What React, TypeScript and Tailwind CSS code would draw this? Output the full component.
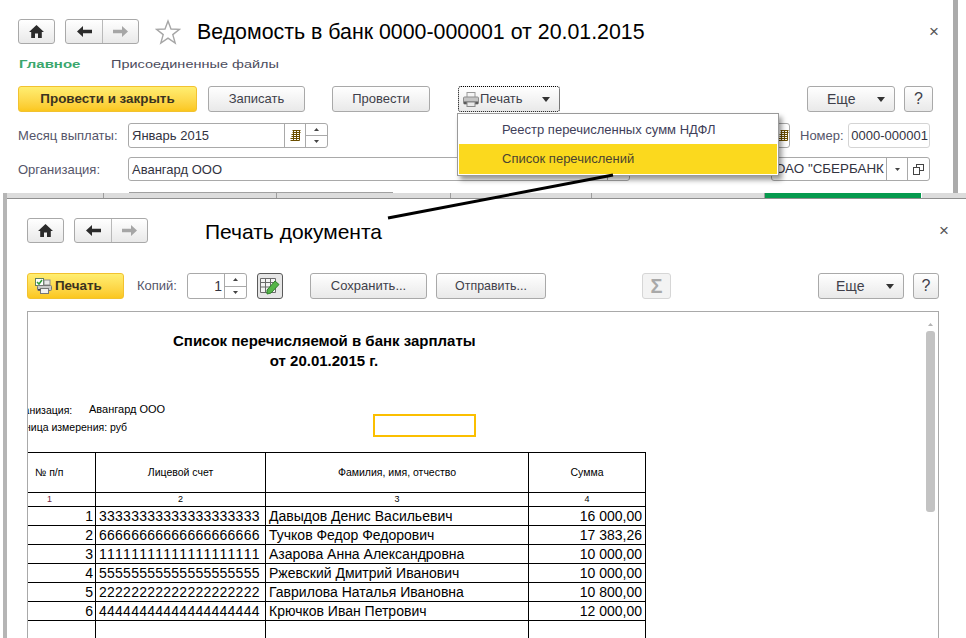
import React from "react";

const ui = "font-['Liberation_Sans',Arial,sans-serif]";

function HomeIcon() {
  return (
    <svg width="15" height="13" viewBox="0 0 15 13">
      <path d="M7.5 0 L15 7 L12.8 7 L12.8 13 L9 13 L9 8.5 L6 8.5 L6 13 L2.2 13 L2.2 7 L0 7 Z" fill="#2b2b2b" />
    </svg>
  );
}

function ArrowIcon({ dir, color }: { dir: "l" | "r"; color: string }) {
  return (
    <svg width="15" height="11" viewBox="0 0 15 11" className={dir === "r" ? "-scale-x-100" : ""}>
      <path d="M0 5.5 L6 0 L6 3.8 L15 3.8 L15 7.2 L6 7.2 L6 11 Z" fill={color} />
    </svg>
  );
}

function Caret() {
  return (
    <svg width="8" height="5" viewBox="0 0 8 5">
      <path d="M0 0 H8 L4 5 Z" fill="#333" />
    </svg>
  );
}

function TinyCaret() {
  return (
    <svg width="5" height="3" viewBox="0 0 5 3">
      <path d="M0 0 H5 L2.5 3 Z" fill="#444" />
    </svg>
  );
}

function TinyUp() {
  return (
    <svg width="5" height="3" viewBox="0 0 5 3">
      <path d="M0 3 H5 L2.5 0 Z" fill="#444" />
    </svg>
  );
}

function PrinterIcon() {
  return (
    <svg width="16" height="15" viewBox="0 0 16 15">
      <rect x="4" y="0.5" width="8" height="5" fill="#f4f4f4" stroke="#9a9a9a" />
      <rect x="0.5" y="5" width="15" height="7" rx="1" fill="#c4c4c4" stroke="#8d8d8d" />
      <rect x="1" y="9.5" width="14" height="2.5" fill="#5a5a5a" />
      <rect x="4" y="10" width="8" height="4.5" fill="#e9e9e9" stroke="#8a8a8a" />
    </svg>
  );
}

function PrintCheckIcon() {
  return (
    <svg width="17" height="16" viewBox="0 0 17 16">
      <rect x="0.5" y="0.5" width="8" height="7" fill="#fff" stroke="#5f7f5f" />
      <path d="M2 4 L4 6 L7 2" fill="none" stroke="#2f9a3a" strokeWidth="1.5" />
      <rect x="9" y="2" width="6" height="5" fill="#e8e8e8" stroke="#8b8b8b" />
      <rect x="2.5" y="7.5" width="14" height="5" rx="1" fill="#c9c9c9" stroke="#777" />
      <rect x="5.5" y="10.5" width="8" height="5" fill="#f2f2f2" stroke="#777" />
      <rect x="3" y="11" width="2.5" height="1.5" fill="#444" />
    </svg>
  );
}

function CalendarIcon() {
  return (
    <svg width="11" height="11" viewBox="0 0 11 11">
      <path
        d="M2.5 .5 H10.5 M2.5 2.5 H10.5 M1.5 4.5 H9.5 M1.5 6.5 H9.5 M.5 8.5 H9.5 M.5 10.5 H9.5 M3.5 .5 V10.5 M6.5 .5 V10.5 M9.5 .5 V10.5"
        stroke="#6b4e00"
        strokeWidth="1"
        fill="none"
      />
    </svg>
  );
}

function OpenIcon() {
  return (
    <svg width="11" height="11" viewBox="0 0 11 11">
      <rect x="3.5" y="0.5" width="7" height="6" fill="none" stroke="#444" />
      <rect x="0.5" y="3.5" width="6" height="7" fill="#fff" stroke="#444" />
    </svg>
  );
}

function TableEditIcon() {
  return (
    <svg width="20" height="18" viewBox="0 0 20 18">
      <path d="M.5 1.5 H15.5 V15.5 H.5 Z M.5 5.5 H15.5 M.5 10 H15.5 M5.5 1.5 V15.5 M10.5 1.5 V15.5" fill="#f4f4f4" stroke="#6b6b6b" />
      <path d="M7 13 L15 4 L19 7.5 L11 16 L7 17 Z" fill="#55b548" stroke="#2f7d2b" />
    </svg>
  );
}

function Btn({
  children,
  w,
  yellow = false,
  className = "",
}: {
  children: React.ReactNode;
  w: string;
  yellow?: boolean;
  className?: string;
}) {
  const skin = yellow
    ? "bg-linear-to-b from-[#ffee70] to-[#fbc71c] border-[#f2c230] font-bold text-[#3a3320] text-[13.4px]"
    : "bg-linear-to-b from-[#ffffff] to-[#e9e9e9] border-[#a9a9a9] text-[#3f3f4a] text-[13px]";
  return (
    <div className={`${w} h-full flex items-center justify-center shrink-0 rounded-[3px] border ${skin} ${className}`}>
      {children}
    </div>
  );
}

function MoreBtn({ w, left, className = "" }: { w: string; left: string; className?: string }) {
  return (
    <div className={`${w} ${left} ${className} h-full flex items-center shrink-0 rounded-[3px] border border-[#a9a9a9] bg-linear-to-b from-[#ffffff] to-[#e9e9e9] text-[14px] text-[#3f3f4a]`}>
      <span className="w-[50px]">Еще</span>
      <Caret />
    </div>
  );
}

function NavButtons() {
  return (
    <>
      <Btn w="w-[37px]">
        <HomeIcon />
      </Btn>
      <div className="ml-[10px] w-[74px] h-full flex shrink-0 rounded-[3px] border border-[#a9a9a9] bg-linear-to-b from-[#ffffff] to-[#e9e9e9]">
        <div className="w-[37px] flex items-center justify-center border-r border-[#b9b9b9]">
          <ArrowIcon dir="l" color="#2b2b2b" />
        </div>
        <div className="flex-1 flex items-center justify-center">
          <ArrowIcon dir="r" color="#a6a6a6" />
        </div>
      </div>
    </>
  );
}

function Spin() {
  return (
    <div className="flex flex-col h-full w-[22px] border-l border-[#a9a9a9]">
      <div className="flex-1 flex items-center justify-center border-b border-[#a9a9a9]">
        <TinyUp />
      </div>
      <div className="flex-1 flex items-center justify-center">
        <TinyCaret />
      </div>
    </div>
  );
}

function Field({ children, w, className = "" }: { children: React.ReactNode; w: string; className?: string }) {
  return (
    <div className={`${w} h-full flex items-stretch shrink-0 bg-white rounded-[3px] border border-[#a9a9a9] text-[13px] text-[#33333f] ${className}`}>
      {children}
    </div>
  );
}

function TopWindow() {
  return (
    <div className="w-[958px] h-[193px] border-r-[5px] border-[#ababab] pl-[18px] flex flex-col shrink-0">
      <div className="mt-[19px] h-[25px] flex items-center">
        <NavButtons />
        <svg width="26" height="26" viewBox="0 0 26 26" className="ml-[16px] shrink-0">
          <path
            d="M13 2 L16 10 L24.5 10.3 L17.8 15.6 L20.2 24 L13 19.2 L5.8 24 L8.2 15.6 L1.5 10.3 L10 10 Z"
            fill="none"
            stroke="#a6a6a6"
            strokeWidth="1.4"
          />
        </svg>
        <div className="ml-[16px] pt-[2px] text-[21.35px] text-black whitespace-nowrap leading-none">
          Ведомость в банк 0000-000001 от 20.01.2015
        </div>
        <div className="ml-auto mr-[14px] text-[#555] text-[17px] leading-none">×</div>
      </div>
      <div className="mt-[13px] h-[14px] flex items-center leading-none whitespace-nowrap scale-y-[0.72]">
        <span className="ml-px w-[92px] shrink-0 font-bold text-[15px] text-[#3aa76d]">Главное</span>
        <span className="text-[14.5px] text-[#4c4c5c]">Присоединенные файлы</span>
      </div>
      <div className="mt-[15px] h-[26px] flex">
        <Btn w="w-[179px]" yellow>Провести и закрыть</Btn>
        <Btn w="w-[97px]" className="ml-[11px]">Записать</Btn>
        <Btn w="w-[98px]" className="ml-[27px]">Провести</Btn>
        <div className="ml-[28px] w-[102px] h-full flex items-center shrink-0 rounded-[3px] border border-dotted border-black bg-linear-to-b from-[#ffffff] to-[#e9e9e9] text-[13px] text-[#3f3f4a] pl-[4px]">
          <PrinterIcon />
          <span className="ml-px">Печать</span>
          <span className="ml-auto mr-[9px] flex"><Caret /></span>
        </div>
        <MoreBtn w="w-[88px] pl-[19px]" left="ml-[247px]" />
        <Btn w="w-[29px]" className="ml-[9px] text-[16px]">?</Btn>
      </div>
      <div className="mt-[11px] h-[25px] flex items-center text-[13px] text-[#55556a]">
        <div className="w-[110px] shrink-0 pt-px">Месяц выплаты:</div>
        <Field w="w-[200px]">
          <div className="flex-1 flex items-center pl-[3px] pt-px">Январь 2015</div>
          <div className="w-[21px] flex items-center justify-center border-l border-[#a9a9a9]"><CalendarIcon /></div>
          <Spin />
        </Field>
        <Field w="w-[90px]" className="ml-[372px] justify-end">
          <div className="w-[11px] flex items-center"><CalendarIcon /></div>
        </Field>
        <div className="ml-[10px] w-[48px] shrink-0 pt-px">Номер:</div>
        <div className="w-[82px] h-full flex items-center justify-end pr-px shrink-0 bg-white rounded-[3px] border border-[#d4d4d4] text-[13px] text-[#33333f] whitespace-nowrap pt-px">
          0000-000001
        </div>
      </div>
      <div className="mt-[9px] h-[24px] flex items-center text-[13px] text-[#55556a]">
        <div className="w-[110px] shrink-0 pt-px">Организация:</div>
        <Field w="w-[502px]">
          <div className="flex-1 flex items-center pl-[3px] pt-px">Авангард ООО</div>
          <div className="w-[22px] border-l border-[#a9a9a9]" />
        </Field>
        <Field w="w-[159px]" className="ml-[141px]">
          <div className="flex-1 flex items-center pl-[3px] pt-px whitespace-nowrap overflow-hidden text-[13.4px]">ОАО "СБЕРБАНК</div>
          <div className="w-[21px] flex items-center justify-center border-l border-[#a9a9a9]"><TinyCaret /></div>
          <div className="w-[22px] flex items-center justify-center border-l border-[#a9a9a9]"><OpenIcon /></div>
        </Field>
      </div>
      <div className="mt-auto ml-[111px] w-[264px] h-px bg-[#a0a0a0]" />
    </div>
  );
}

const stripe = [97, 173, 174, 141, 173];

function Strip() {
  return (
    <div className="h-[5px] flex bg-[#dcdcdc]">
      {stripe.map((w, i) => (
        <div key={i} className="border-r border-[#9d9d9d] shrink-0" style={{ width: w }} />
      ))}
      <div className="w-[157px] bg-[#069a4e] shrink-0 border-r border-white" />
      <div className="flex-1" />
    </div>
  );
}

const rows = [
  ["1", "33333333333333333333", "Давыдов Денис Васильевич", "16 000,00"],
  ["2", "66666666666666666666", "Тучков Федор Федорович", "17 383,26"],
  ["3", "11111111111111111111", "Азарова Анна Александровна", "10 000,00"],
  ["4", "55555555555555555555", "Ржевский Дмитрий Иванович", "10 000,00"],
  ["5", "22222222222222222222", "Гаврилова Наталья Ивановна", "10 800,00"],
  ["6", "44444444444444444444", "Крючков Иван Петрович", "12 000,00"],
];

const cell = "border border-black p-0 overflow-hidden whitespace-nowrap";

function Sheet() {
  return (
    <div className="flex-1 overflow-hidden min-w-0">
      <div className="ml-[-25px] w-[700px] text-black">
        <div className="mt-[19px] ml-[170px] w-[302px] text-center font-bold text-[15px] leading-[20px] whitespace-nowrap">
          <div>Список перечисляемой в банк зарплаты</div>
          <div>от 20.01.2015 г.</div>
        </div>
        <div className="flex mt-[31px]">
          <div className="w-[370px] shrink-0">
            <div className="h-[16px] flex items-center pl-[3px] whitespace-nowrap">
              <span className="w-[83px] text-[10.5px] pt-px">Организация:</span>
              <span className="text-[11px] -mt-[2px]">Авангард ООО</span>
            </div>
            <div className="h-[16px] mt-[2px] flex items-center pl-[3px] text-[10.5px] whitespace-nowrap">
              Единица измерения: руб
            </div>
          </div>
          <div className="mt-[12px] w-[103px] h-[23px] border-2 border-[#fbbf00] shrink-0" />
        </div>
        <table className="mt-[15px] table-fixed border-collapse w-[643px]">
          <colgroup>
            <col className="w-[92px]" />
            <col className="w-[170px]" />
            <col className="w-[263px]" />
            <col className="w-[117px]" />
          </colgroup>
          <tbody>
            <tr className="h-[40px] text-[10.5px] text-center">
              <td className={`${cell} pl-[31px] text-left`}>№ п/п</td>
              <td className={cell}>Лицевой счет</td>
              <td className={cell}>Фамилия, имя, отчество</td>
              <td className={cell}>Сумма</td>
            </tr>
            <tr className="h-[14px] text-[9px] leading-none text-center">
              <td className={cell}><span className="text-[#6b1f3f]">1</span></td>
              <td className={cell}>2</td>
              <td className={cell}>3</td>
              <td className={cell}>4</td>
            </tr>
            {rows.map((r) => (
              <tr key={r[0]} className="h-[19px] text-[14px] leading-none">
                <td className={`${cell} text-right pr-[2px]`}>{r[0]}</td>
                <td className={`${cell} pl-[3px] tracking-[0.25px] [font-kerning:none]`}>{r[1]}</td>
                <td className={`${cell} pl-[3px]`}>{r[2]}</td>
                <td className={`${cell} text-right pr-[3px]`}>{r[3]}</td>
              </tr>
            ))}
            <tr className="h-[19px]">
              <td className={cell} />
              <td className={cell} />
              <td className={cell} />
              <td className={cell} />
            </tr>
          </tbody>
        </table>
      </div>
    </div>
  );
}

function PrintWindow() {
  return (
    <div className="relative flex-1 min-h-0 ml-[3px] border-l-[4px] border-[#b5b5b5] flex flex-col">
      <Strip />
      <div className="flex-1 min-h-0 border-t border-[#8f8f8f] pl-[20px] flex flex-col">
        <div className="mt-[19px] h-[25px] flex items-center">
          <NavButtons />
          <div className="ml-[57px] pt-[2px] text-[21px] text-black leading-none whitespace-nowrap">Печать документа</div>
          <div className="ml-auto mr-[17px] text-[#555] text-[17px] leading-none">×</div>
        </div>
        <div className="mt-[30px] h-[26px] flex items-center">
          <Btn w="w-[97px] !justify-start pl-[7px]" yellow className="gap-[3px]">
            <PrintCheckIcon />
            <span>Печать</span>
          </Btn>
          <div className="ml-[13px] w-[50px] shrink-0 text-[13px] text-[#55556a]">Копий:</div>
          <Field w="w-[60px]">
            <div className="flex-1 flex items-center justify-end pr-[2px] text-[14px]">1</div>
            <Spin />
          </Field>
          <div className="ml-[10px] w-[26px] h-full flex items-center justify-center shrink-0 rounded-[3px] border border-[#5a5a5a] bg-[#e6e6e6]">
            <TableEditIcon />
          </div>
          <Btn w="w-[117px]" className="ml-[27px]">Сохранить...</Btn>
          <Btn w="w-[110px]" className="ml-[9px] !text-[12.4px]">Отправить...</Btn>
          <div className="ml-[96px] w-[29px] h-full flex items-center justify-center shrink-0 rounded-[3px] border border-[#d6d6d6] bg-[#f3f3f3] text-[#a9a9a9] text-[20px] font-bold leading-none">
            Σ
          </div>
          <MoreBtn w="w-[86px] pl-[17px]" left="ml-[147px]" />
          <Btn w="w-[26px]" className="ml-[9px] text-[16px]">?</Btn>
        </div>
        <div className="mt-[12px] w-[912px] flex-1 min-h-0 flex border-x border-t border-[#a9a9a9] overflow-hidden">
          <Sheet />
          <div className="w-[13px] shrink-0 pl-px pr-[3px] pt-[11px] flex flex-col items-center">
            <div className="opacity-40"><TinyUp /></div>
            <div className="mt-[5px] w-[9px] h-[181px] rounded-[3px] bg-[#c3c3c3]" />
          </div>
        </div>
      </div>
    </div>
  );
}

function PrintMenu() {
  return (
    <div className="absolute left-[457px] top-[113px] w-[322px] h-[63px] bg-white border border-[#9a9a9a] shadow-[3px_4px_5px_rgba(0,0,0,0.4)] p-px text-[13px] text-[#3f3f5a]">
      <div className="h-[29px] flex items-center pl-[43px]">Реестр перечисленных сумм НДФЛ</div>
      <div className="h-[30px] flex items-center pl-[43px] bg-[#fbd91e] text-[#4a4430]">Список перечислений</div>
    </div>
  );
}

export default function App() {
  return (
    <div className={`relative w-[966px] h-[638px] overflow-hidden bg-white flex flex-col ${ui}`}>
      <TopWindow />
      <PrintWindow />
      <PrintMenu />
      <svg width="966" height="638" className="absolute left-0 top-0 pointer-events-none">
        <line x1="388" y1="218" x2="613" y2="175" stroke="#000" strokeWidth="3" />
      </svg>
    </div>
  );
}
